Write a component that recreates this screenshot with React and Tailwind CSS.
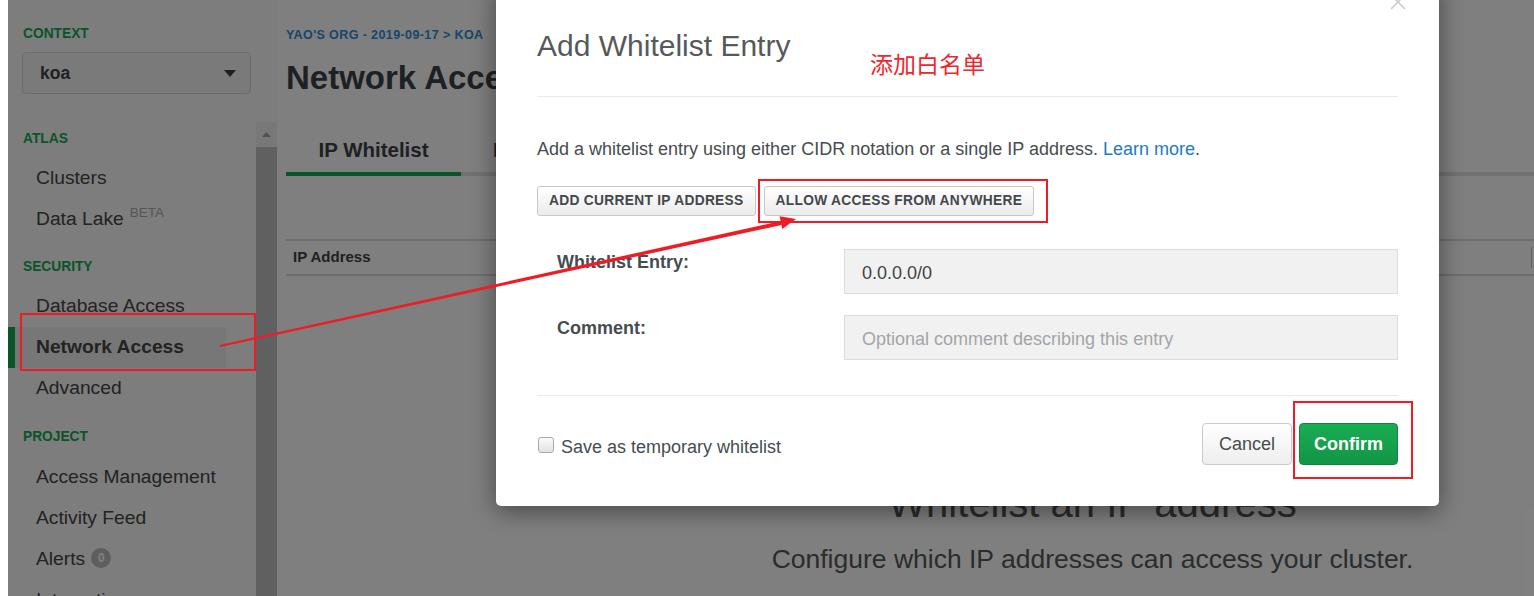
import React from 'react';

const SANS = "font-['Liberation_Sans',Arial,Helvetica,sans-serif]";

const SectionHeader = ({ children }) => (
  <div className="h-5 pl-[15px] text-[13.75px] font-bold uppercase leading-5 text-[#13aa52]">{children}</div>
);

const NavItem = ({ active, children }) => (
  <div
    className={`flex h-[41px] w-[218px] items-center text-[19.25px] text-[#464646] ${
      active ? 'border-l-[7px] border-[#13aa52] bg-[#eceeed] pl-[21px] font-bold' : 'pl-[28px]'
    }`}
  >
    {children}
  </div>
);

const Sidebar = () => (
  <aside className="flex w-[269px] shrink-0 flex-col bg-[#fafafa]">
    {/* Context picker */}
    <div className="h-[122px] shrink-0 pt-6">
      <SectionHeader>Context</SectionHeader>
      <div className="ml-[14px] mt-2 flex h-[42px] w-[229px] items-center justify-between rounded-[4px] border border-[#d6d8da] bg-[#f4f5f6] pl-[17px] pr-[14px]">
        <span className="text-[17.5px] font-bold text-[#3d4247]">koa</span>
        <svg width="12" height="7" viewBox="0 0 12 7">
          <polygon points="0,0 12,0 6,7" fill="#3d4247" />
        </svg>
      </div>
    </div>

    {/* Scrolling nav */}
    <div className="flex min-h-0 flex-1">
      <nav className="w-[248px] pt-[7px]">
        <SectionHeader>Atlas</SectionHeader>
        <div className="mt-[9px] mb-[17px]">
          <NavItem>Clusters</NavItem>
          <NavItem>
            Data Lake
            <sup className="ml-[6px] text-[13.5px] text-[#a9acae]">BETA</sup>
          </NavItem>
        </div>
        <SectionHeader>Security</SectionHeader>
        <div className="mt-[9px] mb-[18px]">
          <NavItem>Database Access</NavItem>
          <NavItem active>Network Access</NavItem>
          <NavItem>Advanced</NavItem>
        </div>
        <SectionHeader>Project</SectionHeader>
        <div className="mt-[10px]">
          <NavItem>Access Management</NavItem>
          <NavItem>Activity Feed</NavItem>
          <NavItem>
            Alerts
            <span className="relative -top-[2px] ml-[6px] inline-flex h-5 w-5 items-center justify-center rounded-full bg-[#bcbcbc] text-[12px] font-bold text-white">
              0
            </span>
          </NavItem>
          <NavItem>Integrations</NavItem>
        </div>
      </nav>
      {/* scrollbar */}
      <div className="flex w-[21px] flex-col">
        <div className="flex h-[25px] items-center justify-center bg-[#f1f1f1]">
          <svg width="9" height="5" viewBox="0 0 9 5">
            <polygon points="0,5 9,5 4.5,0" fill="#a3a3a3" />
          </svg>
        </div>
        <div className="flex-1 bg-[#c1c1c1]" />
      </div>
    </div>
  </aside>
);

const Main = () => (
  <main className="w-[1622px] shrink-0 bg-white pl-[9px]">
    <div className="pt-[26px] text-[12.5px] font-bold uppercase leading-[18px] tracking-[0.4px] text-[#2a8ed8]">
      YAO'S ORG - 2019-09-17 &gt; KOA
    </div>
    <h1 className="mt-[14px] text-[33px] font-bold leading-10 text-[#3d4247]">Network Access</h1>

    <div className="mt-[30px] flex border-b-4 border-[#e3e3e3]">
      <div className="-mb-1 w-[175px] border-b-4 border-[#13aa52] py-2 text-center text-[20.5px] font-bold leading-7 text-[#3d4247]">
        IP Whitelist
      </div>
      <div className="-mb-1 border-b-4 border-transparent px-8 py-2 text-[20.5px] font-bold leading-7 text-[#3d4247]">
        Peering
      </div>
    </div>

    <div className="mt-[63px] flex h-[37px] items-center justify-between border-y-2 border-[#dadada]">
      <div className="w-[1245px] pl-[7px] text-[15px] font-bold text-[#3d4247]">IP Address</div>
      <div className="h-[21px] w-px bg-[#c4c4c4]" />
      <div className="flex-1" />
    </div>

    <div className="mt-[204px] text-center text-[40px] leading-[46px] text-[#54585b]">Whitelist an IP address</div>
    <div className="mt-4 text-center text-[26.5px] leading-[34px] text-[#54585b]">
      Configure which IP addresses can access your cluster.
    </div>
  </main>
);

const Modal = () => (
  <div className="absolute left-[496px] top-[-20px] w-[943px] rounded-b-[5px] bg-white shadow-[0_5px_25px_rgba(0,0,0,0.45)]">
    {/* close */}
    <svg className="absolute left-[894px] top-[14px]" width="16" height="16" viewBox="0 0 16 16">
      <path d="M1 1 L15 15 M15 1 L1 15" stroke="#c7cbce" strokeWidth="1.6" fill="none" />
    </svg>

    <div className="mx-[41px] border-b border-[#e8ebeb] pt-[48px] pb-[32px]">
      <h2 className="text-[30px] leading-9 text-[#55595c]">Add Whitelist Entry</h2>
    </div>
    <div className="absolute left-[374px] top-[68px] font-['Noto_Sans_CJK_SC',sans-serif] text-[23px] leading-[30px] text-[#f0262e]">
      添加白名单
    </div>

    <div className="mx-[41px] border-b border-[#e8ebeb] pt-[40px] pb-[35px]">
      <p className="text-[18px] leading-6 text-[#464c4f]">
        Add a whitelist entry using either CIDR notation or a single IP address.{' '}
        <span className="text-[#1a7bc6]">Learn more</span>.
      </p>

      <div className="mt-[25px] flex gap-2">
        <button className="h-[30px] rounded-[3px] border border-[#c8c8c8] bg-linear-to-b from-white to-[#ebebeb] px-[11px] text-[13.75px] font-bold uppercase tracking-[0.3px] text-[#43484b]">
          Add current IP address
        </button>
        <button className="h-[30px] rounded-[3px] border border-[#c8c8c8] bg-linear-to-b from-white to-[#ebebeb] px-[11px] text-[13.75px] font-bold uppercase tracking-[0.3px] text-[#43484b]">
          Allow access from anywhere
        </button>
      </div>

      <div className="mt-[33px] flex flex-col gap-[21px]">
        <div className="flex">
          <label className="w-[307px] pl-5 pt-px text-[18px] font-bold leading-6 text-[#464c4f]">Whitelist Entry:</label>
          <div className="flex h-[45px] flex-1 items-center border border-[#dcdcdc] bg-[#f1f1f1] px-[17px] pt-[3px] text-[18px] text-[#3d4347]">
            0.0.0.0/0
          </div>
        </div>
        <div className="flex">
          <label className="w-[307px] pl-5 pt-px text-[18px] font-bold leading-6 text-[#464c4f]">Comment:</label>
          <div className="flex h-[45px] flex-1 items-center border border-[#dcdcdc] bg-[#f1f1f1] px-[17px] pt-[3px] text-[18px] text-[#a2a6a8]">
            Optional comment describing this entry
          </div>
        </div>
      </div>
    </div>

    <div className="mx-[41px] flex items-center justify-between pt-[27px] pb-[41px]">
      <label className="mt-[6px] flex items-start gap-[7px] pl-px">
        <span className="mt-[2px] h-4 w-4 rounded-[3px] border border-[#a9a9a9] bg-linear-to-b from-[#fbfbfb] to-[#e2e2e2]" />
        <span className="text-[18px] leading-6 text-[#464c4f]">Save as temporary whitelist</span>
      </label>
      <div className="flex gap-[7px]">
        <button className="h-[42px] rounded-[4px] border border-[#cacaca] bg-linear-to-b from-white to-[#eeeeee] px-4 text-[18px] text-[#464c4f]">
          Cancel
        </button>
        <button className="h-[42px] rounded-[4px] border border-[#12843f] bg-linear-to-b from-[#19ad53] to-[#139547] px-[14px] text-[18px] font-bold text-white">
          Confirm
        </button>
      </div>
    </div>
  </div>
);

const Annotations = () => (
  <>
    <div className="pointer-events-none absolute left-[20px] top-[313px] h-[58px] w-[236px] border-2 border-[#ee1c25]" />
    <div className="pointer-events-none absolute left-[758px] top-[179px] h-[44px] w-[290px] border-2 border-[#ee1c25]" />
    <div className="pointer-events-none absolute left-[1293px] top-[401px] h-[78px] w-[120px] border-2 border-[#ee1c25]" />
    <svg className="pointer-events-none absolute left-0 top-0" width="1534" height="596">
      <polygon points="220.2,347 219.8,345 780.9,221.1 781.7,224.9" fill="#ee1c25" />
      <polygon points="796,219 779.6,216.2 782.3,228.9" fill="#ee1c25" />
    </svg>
  </>
);

export default function App() {
  return (
    <div className={`relative flex h-[596px] w-[1534px] overflow-hidden bg-white ${SANS}`}>
      <div className="w-2 shrink-0 bg-white" />
      <div className="flex min-w-0 flex-1 overflow-hidden">
        <Sidebar />
        <Main />
      </div>
      {/* backdrop */}
      <div className="absolute bottom-0 left-2 right-0 top-0 bg-black/50" />
      <Modal />
      <Annotations />
    </div>
  );
}
